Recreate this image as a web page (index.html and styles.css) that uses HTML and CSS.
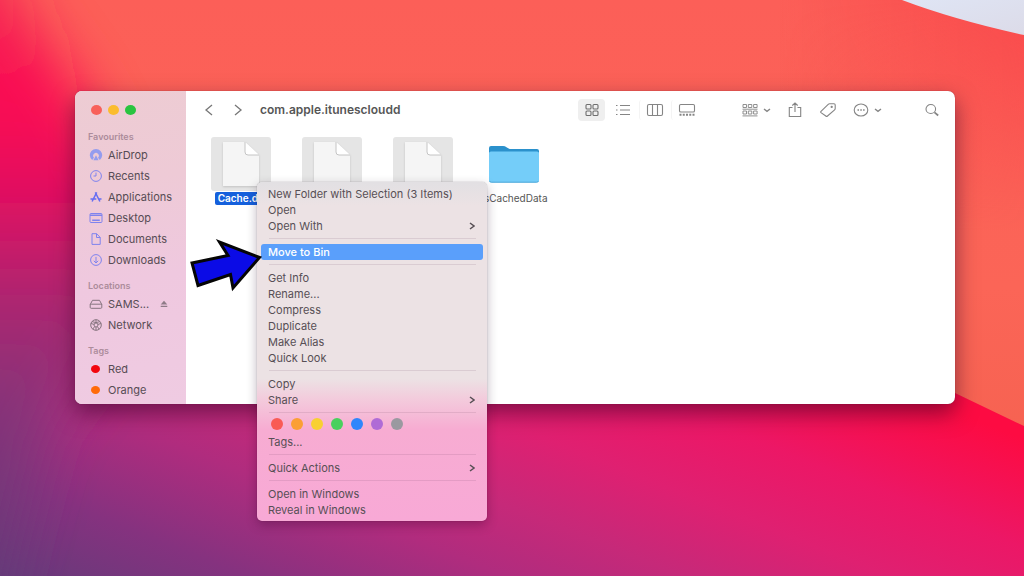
FILE: index.html
```html
<!DOCTYPE html>
<html lang="en">
<head>
<meta charset="utf-8">
<title>com.apple.itunescloudd</title>
<link rel="stylesheet" href="styles.css">
</head>
<body>
<div class="desktop">
  <svg class="wallpaper" viewBox="0 0 1024 576" preserveAspectRatio="none" aria-hidden="true">
    <defs>
      <linearGradient id="base" x1="0" y1="0" x2="0" y2="1">
        <stop offset="0" stop-color="#fc5f58"/><stop offset=".5" stop-color="#fb6557"/><stop offset="1" stop-color="#f2604c"/>
      </linearGradient>
      <linearGradient id="lower" gradientUnits="userSpaceOnUse" x1="0" y1="576" x2="187" y2="106">
        <stop offset="0" stop-color="#663a7a"/><stop offset=".18" stop-color="#85327f"/><stop offset=".37" stop-color="#b02c7e"/><stop offset=".5" stop-color="#c62979"/><stop offset=".65" stop-color="#df2071"/><stop offset=".8" stop-color="#ec1766"/><stop offset="1" stop-color="#fd0b42"/>
      </linearGradient>
      <linearGradient id="left" x1="0" y1="0" x2="0" y2="1">
        <stop offset="0" stop-color="#fa3552"/><stop offset=".12" stop-color="#f52452"/><stop offset=".26" stop-color="#fb0553"/><stop offset=".38" stop-color="#de1062"/><stop offset=".5" stop-color="#b02470"/><stop offset=".65" stop-color="#863579"/><stop offset=".89" stop-color="#643a78"/>
      </linearGradient>
      <linearGradient id="right" x1="0" y1="0" x2="1" y2="0">
        <stop offset="0" stop-color="#f94a4c" stop-opacity="0"/><stop offset="1" stop-color="#f94a4c"/>
      </linearGradient>
      <linearGradient id="fade" x1="0" y1="0" x2="0" y2="1">
        <stop offset="0" stop-color="#fff"/><stop offset="1" stop-color="#000"/>
      </linearGradient>
      <mask id="top"><rect x="780" width="244" height="230" fill="url(#fade)"/></mask>
      <linearGradient id="sky" x1="0" y1="0" x2="1" y2="1">
        <stop offset="0" stop-color="#dfe5f5"/><stop offset="1" stop-color="#dcdbe8"/>
      </linearGradient>
      <filter id="soft" x="-50%" y="-50%" width="200%" height="200%"><feGaussianBlur stdDeviation="28"/></filter>
    </defs>
    <rect width="1024" height="576" fill="url(#base)"/>
    <rect x="780" width="244" height="230" fill="url(#right)" mask="url(#top)"/>
    <path d="M780 300 955 393 1024 426V576H0V300Z" fill="url(#lower)"/>
    <path d="M-120-80H-30L30 20 80 90 130 200 110 340 40 430-20 660H-120Z" fill="url(#left)" filter="url(#soft)"/>
    <path d="M902 0Q955 20 1024 35V0Z" fill="url(#sky)"/>
  </svg>

  <main class="window">
    <aside class="sidebar">
      <div class="lights">
        <button class="light close" aria-label="Close"></button>
        <button class="light minimise" aria-label="Minimise"></button>
        <button class="light zoom" aria-label="Zoom"></button>
      </div>
      <nav class="places">
        <section>
          <h2>Favourites</h2>
          <a href="#"><svg class="ico" viewBox="0 0 14 14"><path d="M3.200 12A6.200 6.200 0 1 1 10.800 12L9 9.800A2.800 2.800 0 1 0 5 9.800Z" fill="#949cee" stroke="none"/><path d="m7 7.200 2.600 5.100H4.400Z" fill="#949cee" stroke="none"/></svg>AirDrop</a>
          <a href="#"><svg class="ico" viewBox="0 0 14 14"><circle cx="7" cy="7" r="5.400"/><path d="M7 3.600V7H4.500"/></svg>Recents</a>
          <a href="#"><svg class="ico strong" viewBox="0 0 14 14"><path d="m6.300 2.300 4.600 9.200M7.700 2.300 3.100 11.500M1.500 9h5.800M9.900 9h2.600"/></svg>Applications</a>
          <a href="#"><svg class="ico" viewBox="0 0 14 14"><rect x="1" y="2.500" width="12" height="9" rx="1"/><path d="M1 4.300h12M3.200 9.300h7.600" stroke-width="1.400"/></svg>Desktop</a>
          <a href="#"><svg class="ico" viewBox="0 0 14 14"><path d="M3 1.700h4.600l3.600 3.700v7H3ZM7.500 1.700v3.800h3.700"/></svg>Documents</a>
          <a href="#"><svg class="ico" viewBox="0 0 14 14"><circle cx="7" cy="7" r="5.400"/><path d="M7 3.900v6M4.800 7.800 7 10l2.200-2.200"/></svg>Downloads</a>
        </section>
        <section>
          <h2>Locations</h2>
          <a href="#"><svg class="ico grey" viewBox="0 0 14 14"><path d="M1.200 7.500 3.500 3.300h7l2.300 4.200v2.800q0 1-1 1H2.200q-1 0-1-1ZM1.200 8q.2-.8 1-.8h9.600q.8 0 1 .8"/></svg>SAMS...<svg class="eject" viewBox="0 0 8 8"><path d="m4 .8 3.300 3.700H.7ZM.7 5.700h6.600V7H.7Z"/></svg></a>
          <a href="#"><svg class="ico grey" viewBox="0 0 14 14"><circle cx="7" cy="7" r="5.300"/><circle cx="7" cy="7" r="2"/><path d="M7 1.700V5M7 9v3.300M1.900 5.500l3.200.9M12.100 5.500l-3.200.9M3.700 11.200l2-2.600M10.300 11.200l-2-2.600M3 3.600q4 2 8 0"/></svg>Network</a>
        </section>
        <section>
          <h2>Tags</h2>
          <a href="#"><i class="tag red"></i>Red</a>
          <a href="#"><i class="tag orange"></i>Orange</a>
        </section>
      </nav>
    </aside>

    <div class="content">
      <header class="toolbar">
        <button class="tool nav" aria-label="Back"><svg viewBox="0 0 12 14"><path d="M9 2 3 7l6 5"/></svg></button>
        <button class="tool nav" aria-label="Forward"><svg viewBox="0 0 12 14"><path d="m3 2 6 5-6 5"/></svg></button>
        <h1>com.apple.itunescloudd</h1>
        <div class="views">
          <button class="tool view on" aria-label="Icons"><svg viewBox="0 0 18 14"><rect x="3" y="1.500" width="5" height="4.500" rx="1"/><rect x="10" y="1.500" width="5" height="4.500" rx="1"/><rect x="3" y="8" width="5" height="4.500" rx="1"/><rect x="10" y="8" width="5" height="4.500" rx="1"/></svg></button>
          <button class="tool view" aria-label="List"><svg viewBox="0 0 18 14"><path d="M6 2.500h10M6 7h10M6 11.500h10M2 2.500h1.500M2 7h1.500M2 11.500h1.500"/></svg></button>
          <button class="tool view line" aria-label="Columns"><svg viewBox="0 0 18 14"><rect x="1.500" y="1.500" width="15" height="11" rx="1.500"/><path d="M6.500 1.500v11M11.500 1.500v11"/></svg></button>
          <button class="tool view line" aria-label="Gallery"><svg viewBox="0 0 18 14"><rect x="1.500" y="1.500" width="15" height="7.500" rx="1.300"/><path d="M1.500 11.800h15" stroke-width="2" stroke-dasharray="2 1.250"/></svg></button>
        </div>
        <div class="actions">
          <button class="tool drop" aria-label="Group"><svg viewBox="0 0 18 14"><path d="M2 1.500h3.500v3H2ZM7.300 1.500h3.500v3H7.300ZM12.600 1.500h3.500v3h-3.500ZM2 8h3.500v3H2ZM7.300 8h3.500v3H7.300ZM12.600 8h3.500v3h-3.500ZM1.500 6.200h15M1.500 12.900h15" stroke-width=".9"/></svg><svg class="chev" viewBox="0 0 8 8"><path d="m1 3 3 2.300L7 3"/></svg></button>
          <button class="tool" aria-label="Share"><svg class="tall" viewBox="0 0 18 16"><path d="M6.500 5.500H3.300v9h11.400v-9h-3.200M9 10V1.200M6.300 3.500 9 1l2.700 2.500"/></svg></button>
          <button class="tool" aria-label="Tags"><svg class="tall" viewBox="0 0 18 16"><path d="M2 9.300 9.200 2.300q.6-.5 1.300-.5H15q1.200 0 1.200 1.200v3.500q0 .8-.6 1.300L8.500 14q-.9.800-1.700 0L2 10.700q-.7-.7 0-1.400Z"/><circle cx="12.700" cy="4.900" r=".6"/></svg></button>
          <button class="tool drop" aria-label="More"><svg viewBox="0 0 18 14"><ellipse cx="9" cy="7" rx="6.800" ry="6"/><path d="M5.500 7H7M8.300 7h1.500M11.100 7h1.500" stroke-width="1.500"/></svg><svg class="chev" viewBox="0 0 8 8"><path d="m1 3 3 2.300L7 3"/></svg></button>
        </div>
        <button class="tool search" aria-label="Search"><svg viewBox="0 0 18 14"><ellipse cx="7.800" cy="6" rx="4.800" ry="4.500"/><path d="m11.500 9.300 3.700 3.200" stroke-width="1.700"/></svg></button>
      </header>

      <div class="files">
        <figure class="file">
          <div class="thumb picked"><svg class="doc" viewBox="0 0 36 44"><path class="sheet" d="M0 0H22L36 13V44H0Z"/><path class="flap" d="M22 0V10q0 3 3 3H36Z"/><path class="fold" d="M22 0V10q0 3 3 3H36"/></svg></div>
          <figcaption class="chosen">Cache.db</figcaption>
        </figure>
        <figure class="file">
          <div class="thumb picked"><svg class="doc" viewBox="0 0 36 44"><path class="sheet" d="M0 0H22L36 13V44H0Z"/><path class="flap" d="M22 0V10q0 3 3 3H36Z"/><path class="fold" d="M22 0V10q0 3 3 3H36"/></svg></div>
        </figure>
        <figure class="file">
          <div class="thumb picked"><svg class="doc" viewBox="0 0 36 44"><path class="sheet" d="M0 0H22L36 13V44H0Z"/><path class="flap" d="M22 0V10q0 3 3 3H36Z"/><path class="fold" d="M22 0V10q0 3 3 3H36"/></svg></div>
        </figure>
        <figure class="file">
          <div class="thumb"><svg class="folder" viewBox="0 0 50 38"><path d="M0 3Q0 1 2 1H14q2 0 3.500 1.200T21 4H48q2 0 2 2V20H0Z" fill="#2b91cc"/><path d="M0 8Q0 6.500 2 6.500H48Q50 6.500 50 8V35.500q0 2-2 2H2q-2 0-2-2Z" fill="#74cdf9"/><path d="M.5 36q.5 1.200 2 1.200h45q1.500 0 2-1.200" fill="none" stroke="#4fa9d8"/></svg></div>
          <figcaption>fsCachedData</figcaption>
        </figure>
      </div>
    </div>
  </main>

  <div class="menu" role="menu">
    <button role="menuitem">New Folder with Selection (3 Items)</button>
    <button role="menuitem">Open</button>
    <button role="menuitem">Open With<svg class="more" viewBox="0 0 6 8"><path d="m1 1 4 3-4 3"/></svg></button>
    <hr>
    <button role="menuitem" class="active">Move to Bin</button>
    <hr>
    <button role="menuitem">Get Info</button>
    <button role="menuitem">Rename...</button>
    <button role="menuitem">Compress</button>
    <button role="menuitem">Duplicate</button>
    <button role="menuitem">Make Alias</button>
    <button role="menuitem">Quick Look</button>
    <hr>
    <button role="menuitem">Copy</button>
    <button role="menuitem">Share<svg class="more" viewBox="0 0 6 8"><path d="m1 1 4 3-4 3"/></svg></button>
    <hr>
    <div class="colours">
      <button class="dot c1" aria-label="Red"></button>
      <button class="dot c2" aria-label="Orange"></button>
      <button class="dot c3" aria-label="Yellow"></button>
      <button class="dot c4" aria-label="Green"></button>
      <button class="dot c5" aria-label="Blue"></button>
      <button class="dot c6" aria-label="Purple"></button>
      <button class="dot c7" aria-label="Grey"></button>
    </div>
    <button role="menuitem">Tags...</button>
    <hr>
    <button role="menuitem">Quick Actions<svg class="more" viewBox="0 0 6 8"><path d="m1 1 4 3-4 3"/></svg></button>
    <hr>
    <button role="menuitem">Open in Windows</button>
    <button role="menuitem">Reveal in Windows</button>
  </div>

  <svg class="pointer" viewBox="0 0 76 56" aria-hidden="true"><path d="M5 26 41 18.500 32.500 5 72.500 20.500 46 51 43.500 37.500 11 48.500Z"/></svg>
</div>
</body>
</html>
```

FILE: styles.css
```css
* { box-sizing: border-box; }
body { margin: 0; font-family: Inter, "Liberation Sans", sans-serif; font-size: 10px; color: #4e484c; }
button { margin: 0; padding: 0; border: 0; background: none; font: inherit; color: inherit; }
svg { display: block; fill: none; stroke: currentColor; flex: none; }

.desktop { position: relative; min-height: 100vh; overflow: hidden; }
.wallpaper { position: absolute; inset: 0; width: 100%; height: 100%; stroke: none; }

.window {
  position: absolute; top: 91px; left: 75px; right: 69px;
  display: flex; border-radius: 7px; background: #fff;
  box-shadow: 0 0 1px rgba(60, 0, 30, .5), 0 9px 22px rgba(50, 0, 40, .55);
}
.sidebar {
  flex: none; width: 111px; padding: 14px 0 4px 13px; border-radius: 7px 0 0 7px;
  background: linear-gradient(170deg, #edccd3 0%, #eecad6 30%, #efc8df 60%, #efcbe2 100%);
}
.lights { display: flex; gap: 6px; padding-left: 3px; height: 25px; }
.light { width: 11px; height: 10px; border-radius: 50%; }
.close { background: #f8605a; }
.minimise { background: #fbbc2e; }
.zoom { background: #29c440; }
.places { display: flex; flex-direction: column; gap: 9px; }
.places h2 { margin: 0; font-size: 9px; line-height: 14px; font-weight: 600; color: #ac8c9b; }
.places a { display: flex; align-items: center; gap: 5px; height: 21px; padding-left: 1px; font-size: 11px; color: #574c54; text-decoration: none; }
.ico { width: 14px; height: 14px; color: #7f83ee; stroke-width: 1; }
.strong { color: #656df2; stroke-width: 1.500px; }
.grey { color: #86747f; }
.eject { width: 8px; height: 8px; margin-left: 6px; fill: #8e7b87; stroke: none; }
.tag { width: 9px; height: 8px; margin: 0 3px 0 2px; border-radius: 50%; }
.red { background: #f2060e; }
.orange { background: #ff6b0a; }

.content { flex: 1; min-width: 0; }
.toolbar { display: flex; align-items: center; height: 38px; padding: 0 14px 0 16px; color: #858585; }
.tool { display: flex; align-items: center; justify-content: center; flex: none; height: 22px; }
.tool svg { width: 18px; height: 14px; stroke-width: 1.100px; }
.tool .tall { height: 16px; }
.tool.nav { width: 14px; margin-right: 15px; color: #777; }
.tool.nav svg { width: 12px; stroke-width: 1.300px; }
.toolbar h1 { margin: 0 auto 0 0; font-size: 12px; line-height: 16px; font-weight: 600; color: #565656; }
.views { display: flex; gap: 3px; margin-right: 40px; }
.tool.view { width: 29px; border-radius: 4px; }
.tool.on { width: 27px; background: #efefef; color: #6f6f6f; }
.tool.line { box-shadow: -2px 0 0 -1px #f4f4f4; }
.actions { display: flex; gap: 15px; margin-right: 41px; }
.drop { gap: 4px; }
.tool .chev { width: 8px; height: 8px; stroke-width: 1.400px; }

.files { display: flex; gap: 31px; padding: 8px 25px; }
.file { width: 60px; margin: 0; display: flex; flex-direction: column; align-items: center; gap: 1px; }
.thumb { display: flex; align-items: center; justify-content: center; width: 60px; height: 54px; border-radius: 3px; }
.picked { background: #e5e5e5; }
.doc { width: 36px; height: 44px; stroke: none; filter: drop-shadow(0 1px 1px rgba(0, 0, 0, .15)); }
.sheet { fill: #f5f5f5; }
.flap { fill: #fff; }
.fold { stroke: #c4c4c4; stroke-width: 1px; }
.folder { width: 50px; height: 38px; stroke: none; }
.file figcaption { padding: 0 3px; font-size: 10px; line-height: 13px; border-radius: 2px; color: #555; }
.file .chosen { background: #1560dc; color: #fff; font-weight: 600; }

.menu {
  position: absolute; top: 182px; left: 257px; width: 230px; padding: 4px 4px 3px;
  display: flex; flex-direction: column; border-radius: 5px;
  background: linear-gradient(#e2e0e3 0, #ece2e4 24px, #ece2e4 58%, #f3cbdc 64%, #f7acd2 73%, #f8a9d6 100%);
  box-shadow: 0 0 1px rgba(0, 0, 0, .45), 0 4px 11px rgba(40, 0, 40, .3);
}
.menu > button { display: flex; align-items: center; justify-content: space-between; height: 16px; padding: 0 8px 0 7px; border-radius: 3px; font-size: 11px; line-height: 16px; color: #574f55; text-align: left; }
.menu > .active { background: #5a9ffb; color: #fff; font-weight: 500; }
.menu hr { width: calc(100% - 15px); margin: 4px 7px 5px 8px; border: 0; border-top: 1px solid rgba(90, 50, 80, .12); }
.more { width: 6px; height: 8px; stroke-width: 1.500px; }
.colours { display: flex; align-items: flex-start; gap: 8px; height: 16px; padding-left: 10px; }
.dot { width: 12px; height: 12px; border-radius: 50%; }
.c1 { background: #f95b55; }
.c2 { background: #fb9f34; }
.c3 { background: #f8d031; }
.c4 { background: #48d05d; }
.c5 { background: #2e86fb; }
.c6 { background: #af6bd6; }
.c7 { background: #9a99a0; }

.pointer { position: absolute; top: 237px; left: 187px; width: 76px; height: 56px; fill: #0b0be6; stroke: #050505; stroke-width: 3px; }
```
